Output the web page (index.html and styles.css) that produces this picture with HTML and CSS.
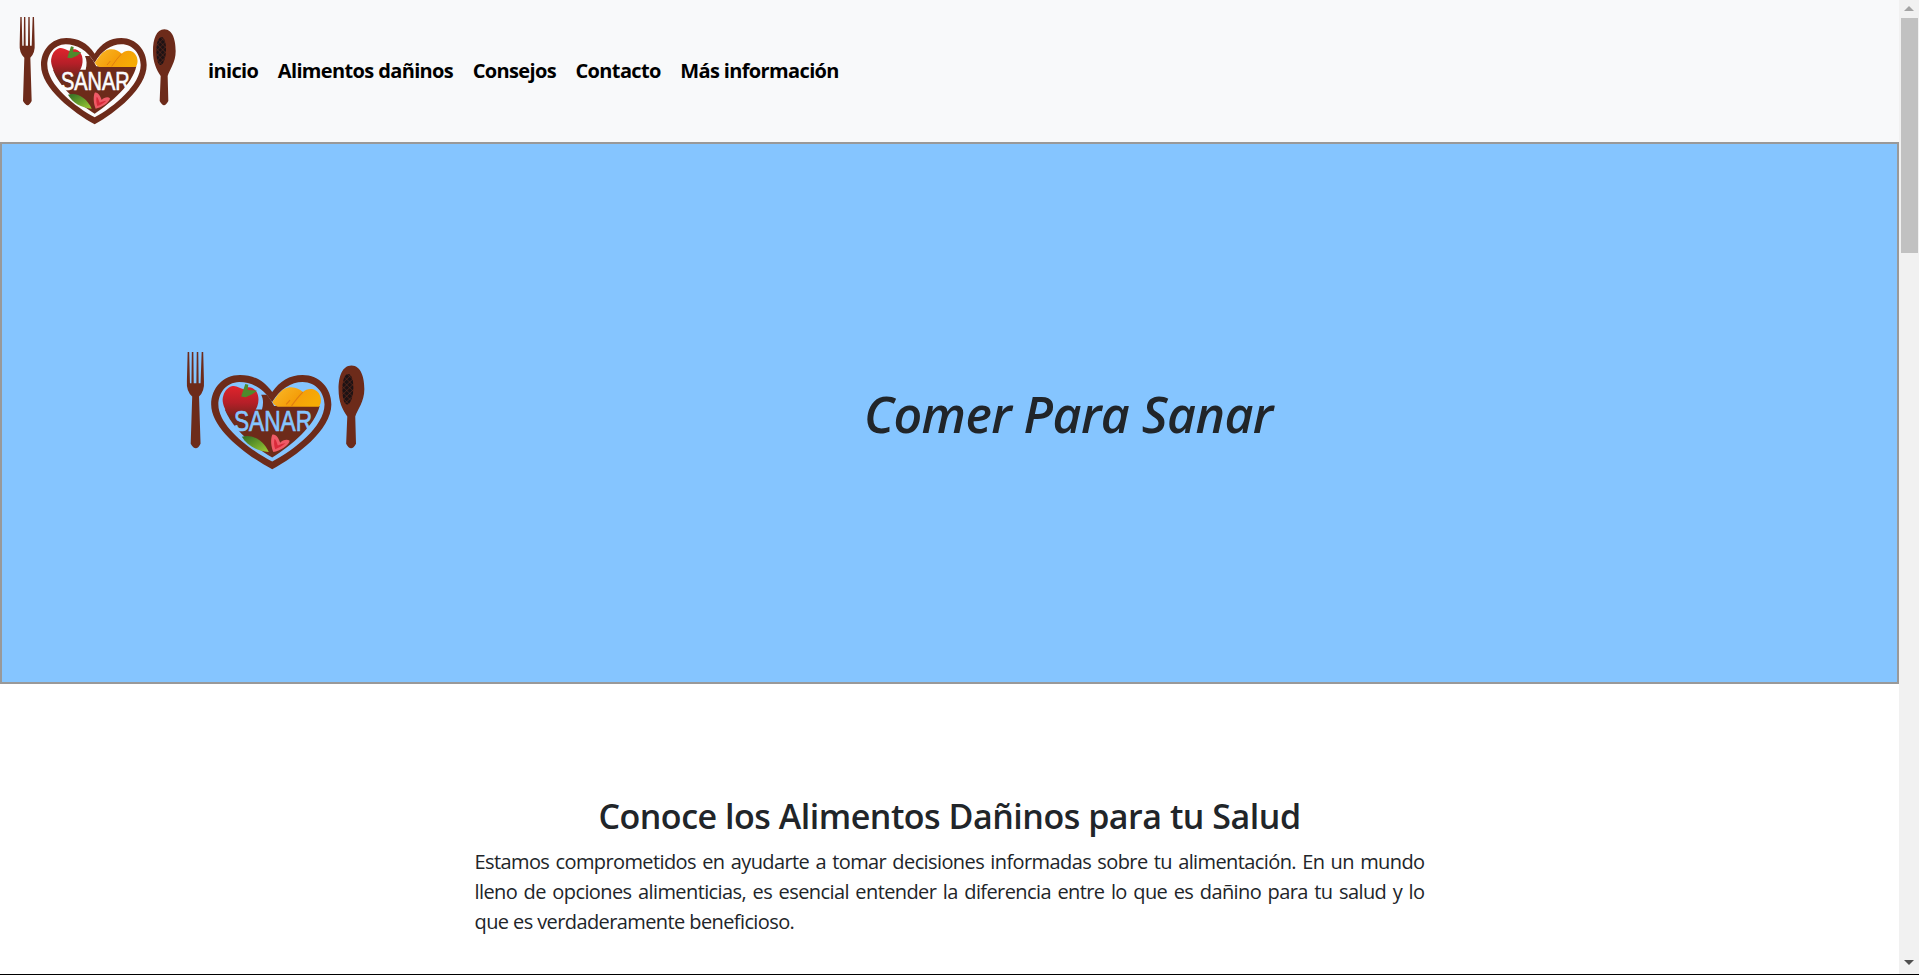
FILE: index.html
```html
<!DOCTYPE html>
<html lang="es">
<head>
<meta charset="utf-8">
<title>Comer Para Sanar</title>
<link rel="stylesheet" href="styles.css">
</head>
<body>
<svg class="defs" width="0" height="0" aria-hidden="true">
  <defs>
    <linearGradient id="apple" x1="0" y1="0" x2="0" y2="1">
      <stop offset="0" stop-color="#e0242c"/><stop offset="0.55" stop-color="#b51f28"/><stop offset="1" stop-color="#74241c"/>
    </linearGradient>
    <linearGradient id="mango" x1="0" y1="0" x2="1" y2="0.4">
      <stop offset="0" stop-color="#f9b92a"/><stop offset="0.6" stop-color="#f59f0a"/><stop offset="1" stop-color="#f6ab05"/>
    </linearGradient>
    <linearGradient id="leaf" x1="0" y1="0" x2="1" y2="1">
      <stop offset="0" stop-color="#2f6a25"/><stop offset="0.6" stop-color="#6fa52d"/><stop offset="1" stop-color="#a4cc36"/>
    </linearGradient>
    <pattern id="seeds" width="11" height="11" patternUnits="userSpaceOnUse" patternTransform="rotate(45 485 150)">
      <rect width="11" height="11" fill="#1d1214"/>
      <path d="M0 0H11M0 0V11" stroke="#6d2b1a" stroke-width="2.5"/>
    </pattern>
    <g id="logo-art">
      <g class="brown">
        <path d="M62 48H66L68 134H72L73 48H77L78 134H85L86 48H90L91 134H96L99 48H103L105 128Q107 155 92 170L96 300Q84 325 70 300L74 170Q58 155 60 128Z"/>
        <path d="M494 85C520 85 528 120 528 150C528 185 510 205 504 225L506 300Q493 325 480 300L483 225C470 205 460 185 460 150C460 115 470 85 494 85Z"/>
        <path d="M285 158C262 125 235 111 200 111C155 111 124 148 124 192C124 262 222 335 285 370C348 335 441 262 441 192C441 148 410 111 365 111C330 111 305 128 285 158Z"/>
      </g>
      <path class="seeds" d="M485 108C496 108 500 130 499 150C498 175 490 192 483 192C474 192 470 172 470 150C470 128 475 108 485 108Z"/>
      <path class="bg" d="M285 185C262 148 232 130 198 130C162 131 143 162 143 192C143 252 228 318 285 349C342 318 423 252 423 192C423 162 402 130 365 130C335 130 305 150 285 185Z"/>
      <path class="brown" d="M160 206H258C262 190 262 178 256 165L270 165Q280 175 290 196H410C398 250 335 305 285 338C232 305 178 255 160 206Z"/>
      <path class="apple" d="M178 142C190 138 200 148 210 150C222 140 240 144 247 165C254 190 240 215 226 226L172 226C160 205 150 185 156 168C160 153 168 146 178 142Z"/>
      <path class="stem" d="M203 170L214 136L222 138L220 152L245 154L232 164L215 172Z"/>
      <path class="mango" d="M286 184C298 172 304 150 330 145C345 143 358 150 366 158C378 145 402 146 410 165C416 178 414 190 408 198H300C292 196 286 190 286 184Z"/>
      <path class="crease" d="M336 196Q352 172 366 158M322 192L332 180"/>
      <path class="leaf" d="M205 281C230 272 262 290 276 323C245 320 218 305 205 281Z"/>
      <path class="berry" d="M285 275C295 272 302 285 306 297C312 290 325 286 331 292C330 305 305 320 288 323C282 308 280 288 285 275Z"/>
      <path class="berry-core" d="M291 287C295 288 297 297 300 305C306 302 314 300 320 299C312 306 302 312 293 315C290 306 289 296 291 287Z"/>
    </g>
  </defs>
</svg>
<div class="window">
  <div class="page">
    <header class="navbar">
      <svg class="nav-logo" viewBox="55 45 480 330" preserveAspectRatio="none" role="img" aria-label="Sanar">
        <use href="#logo-art"/>
        <text class="word" x="184" y="266" textLength="206" lengthAdjust="spacingAndGlyphs">SANAR</text>
      </svg>
      <nav class="nav-links">
        <a href="#">inicio</a>
        <a href="#">Alimentos dañinos</a>
        <a href="#">Consejos</a>
        <a href="#">Contacto</a>
        <a href="#">Más información</a>
      </nav>
    </header>
    <section class="hero">
      <svg class="hero-logo" viewBox="55 45 480 330" preserveAspectRatio="none" role="img" aria-label="Sanar">
        <use href="#logo-art"/>
        <text class="word" x="184" y="266" textLength="206" lengthAdjust="spacingAndGlyphs">SANAR</text>
      </svg>
      <h1>Comer Para Sanar</h1>
    </section>
    <main class="intro">
      <h2>Conoce los Alimentos Dañinos para tu Salud</h2>
      <p>Estamos comprometidos en ayudarte a tomar decisiones informadas sobre tu alimentación. En un mundo lleno de opciones alimenticias, es esencial entender la diferencia entre lo que es dañino para tu salud y lo que es verdaderamente beneficioso.</p>
    </main>
  </div>
  <div class="scrollbar" aria-hidden="true">
    <span class="arrow up"></span>
    <span class="thumb"></span>
    <span class="track"></span>
    <span class="arrow down"></span>
  </div>
</div>
<div class="edge"></div>
</body>
</html>
```
FILE: styles.css
```css
* { box-sizing: border-box; }
html, body { margin: 0; height: 975px; overflow: hidden; background: #fff; }
body { font-family: "Open Sans", "Noto Sans", sans-serif; color: #212529; }
.defs { display: block; height: 0; }
.brown { fill: #6d2b1a; }
.seeds { fill: url(#seeds); }
.bg { fill: var(--logo-bg); }
.word { fill: var(--logo-bg); stroke: var(--logo-bg); stroke-width: 2px; font-family: "Liberation Sans", sans-serif; font-size: 80px; }
.apple { fill: url(#apple); }
.stem { fill: #4f8a2c; }
.mango { fill: url(#mango); }
.crease { fill: none; stroke: #e07d10; stroke-width: 3px; }
.leaf { fill: url(#leaf); }
.berry { fill: #ee5a66; }
.berry-core { fill: #d92a3a; }
.window { display: flex; height: 974px; }
.page { width: 1899px; flex: none; }
.navbar { height: 142px; background: #f8f9fa; display: flex; align-items: center; padding: 0 0 0 18px; --logo-bg: #fbfcfd; }
.nav-logo { width: 160px; height: 110px; flex: none; }
.nav-links { display: flex; gap: 19.5px; margin-left: 30px; }
.nav-links a { color: #000; text-decoration: none; font-size: 20px; font-weight: 700; letter-spacing: -0.64px; line-height: 30px; }
.hero { height: 542px; background: #85c5ff; border: 2px solid #999; display: flex; align-items: center; --logo-bg: #85c5ff; padding-left: 183px; }
.hero-logo { width: 182px; height: 120px; flex: none; margin-top: -4px; }
.hero h1 { margin: 2px 0 0 497px; font-size: 50px; font-style: italic; font-weight: 600; line-height: 58px; letter-spacing: -0.55px; }
.intro { width: 950px; margin: 0 auto; padding-top: 113px; }
.intro h2 { margin: 0 0 12px; text-align: center; font-size: 34px; font-weight: 600; line-height: 38px; letter-spacing: -0.48px; }
.intro p { margin: 0; font-size: 20px; line-height: 30px; text-align: justify; letter-spacing: -0.6px; }
.scrollbar { width: 20px; flex: none; background: #f1f1f1; display: flex; flex-direction: column; align-items: center; }
.arrow { flex: none; width: 0; height: 0; border-left: 5px solid transparent; border-right: 5px solid transparent; }
.arrow.up { border-bottom: 5px solid #a3a3a3; margin: 6px 0 7px; }
.arrow.down { border-top: 5px solid #505050; margin: 5px 0 9px; }
.thumb { width: 17px; margin-left: 1px; height: 235px; background: #c1c1c1; flex: none; }
.track { flex: 1; }
.edge { height: 1px; background: #000; }
```
